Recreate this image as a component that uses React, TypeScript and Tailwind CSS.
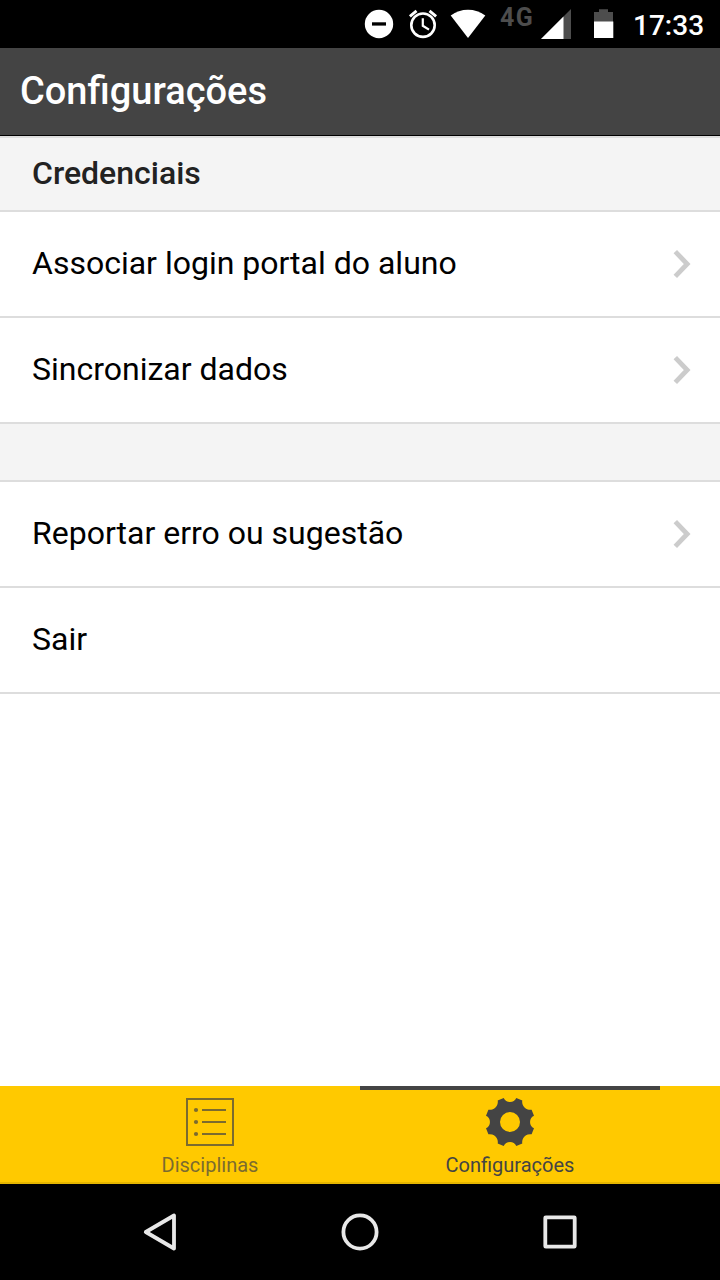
import React from "react";

function StatusBar() {
  return (
    <div className="flex h-12 shrink-0 items-start bg-black pl-[364px] text-white">
      <svg className="h-12 w-[30px]" viewBox="364 0 30 48">
        <circle cx="379" cy="24" r="14.2" fill="#fff" />
        <rect x="372" y="22.3" width="14" height="3.3" fill="#000" />
      </svg>
      <svg className="ml-[14px] h-12 w-[30px]" viewBox="408 0 30 48" fill="none" stroke="#fff">
        <circle cx="423" cy="25.2" r="11.7" strokeWidth="2.6" />
        <path d="M422.8 18.2V25.8L429 29.6" strokeWidth="2.2" />
        <path d="M409.9 16.3L416.5 10.8M436.1 16.3L429.5 10.8" strokeWidth="2.9" />
      </svg>
      <svg className="ml-[12px] h-12 w-[36px]" viewBox="450 0 36 48">
        <path d="M450.7 15.4Q458.5 9.8 468 9.8T485.3 15.4L468 38Z" fill="#fff" />
      </svg>
      <span className="ml-[14px] mt-[3px] w-[36px] whitespace-nowrap text-[25px] leading-[29px] font-bold tracking-[1.5px] text-[#4d4d4d]">4G</span>
      <svg className="ml-[4px] h-12 w-[32px]" viewBox="540 0 32 48">
        <path d="M541 39L571 9V39Z" fill="#4d4d4d" />
        <path d="M541 39L563.5 16.5V39Z" fill="#fff" />
      </svg>
      <svg className="ml-[21px] h-12 w-[22px]" viewBox="593 0 22 48">
        <path d="M594 12H599V9.3H608V12H613V22H594Z" fill="#4d4d4d" />
        <rect x="594" y="21.5" width="19.3" height="16.5" fill="#fff" />
      </svg>
      <span className="ml-[18px] mt-[9px] whitespace-nowrap text-[28px] leading-[33px] font-medium">17:33</span>
    </div>
  );
}

function Row({ label, arrow = true }: { label: string; arrow?: boolean }) {
  return (
    <div className="flex h-[106px] shrink-0 items-center justify-between border-b-2 border-[#dddddd] bg-white pr-[28px] pl-8">
      <span className="pb-[2px] text-[32px] leading-[38px] text-black">{label}</span>
      {arrow && (
        <svg className="h-8 w-5" viewBox="0 0 20 32" fill="none">
          <path d="M3.3 3.6L15.2 16L3.3 28.4" stroke="#cccccc" strokeWidth="4.8" />
        </svg>
      )}
    </div>
  );
}

function TabBar() {
  return (
    <div className="flex h-[98px] shrink-0 border-b-2 border-[#e6b600] bg-[#ffc900] px-[60px]">
      <div className="flex w-[300px] flex-col items-center pt-3 text-[#444444] opacity-70">
        <svg className="h-12 w-12" viewBox="0 0 48 48">
          <rect x="1" y="1" width="46" height="46" fill="none" stroke="currentColor" strokeWidth="2" />
          <path d="M16 12H40M16 24H40M16 36H40" stroke="currentColor" strokeWidth="2" />
          <circle cx="10" cy="12" r="2.1" fill="currentColor" />
          <circle cx="10" cy="24" r="2.1" fill="currentColor" />
          <circle cx="10" cy="36" r="2.1" fill="currentColor" />
        </svg>
        <span className="mt-[7px] text-[20px] leading-6">Disciplinas</span>
      </div>
      <div className="flex w-[300px] flex-col items-center border-t-4 border-[#444444] pt-2 text-[#444444]">
        <svg className="h-12 w-12" viewBox="-24 -24 48 48">
          <path
            fill="currentColor"
            fillRule="evenodd"
            d="M-6.3-24A7 7 0 0 0 6.3-24L12.3-21.6A8 8 0 0 0 21.6-12.3L24-6.3A7 7 0 0 0 24 6.3L21.6 12.3A8 8 0 0 0 12.3 21.6L6.3 24A7 7 0 0 0-6.3 24L-12.3 21.6A8 8 0 0 0-21.6 12.3L-24 6.3A7 7 0 0 0-24-6.3L-21.6-12.3A8 8 0 0 0-12.3-21.6ZM10 0A10 10 0 1 0-10 0A10 10 0 1 0 10 0Z"
          />
        </svg>
        <span className="mt-[7px] text-[20px] leading-6">Configurações</span>
      </div>
    </div>
  );
}

function NavigationBar() {
  return (
    <div className="flex h-24 shrink-0 items-center justify-between bg-black px-[140px]">
      <svg className="h-10 w-10" viewBox="140 1212 40 40" fill="none">
        <path d="M174 1215.5V1248.5L145.8 1232Z" stroke="#e8e8e8" strokeWidth="3.8" strokeLinejoin="round" />
      </svg>
      <svg className="h-10 w-10" viewBox="0 0 40 40" fill="none">
        <circle cx="20" cy="20" r="16.6" stroke="#e8e8e8" strokeWidth="3.8" />
      </svg>
      <svg className="h-10 w-10" viewBox="0 0 40 40" fill="none">
        <rect x="5.3" y="5.3" width="29.4" height="29.4" rx=".5" stroke="#e8e8e8" strokeWidth="3.8" />
      </svg>
    </div>
  );
}

export default function App() {
  return (
    <div className="flex h-[1280px] w-[720px] flex-col overflow-hidden bg-white font-[Roboto,sans-serif]">
      <StatusBar />
      <header className="flex h-[88px] shrink-0 items-center border-b border-black bg-[#444444] pl-5">
        <h1 className="pb-[2px] text-[38px] leading-[44px] font-medium text-white">Configurações</h1>
      </header>
      <main className="flex flex-1 flex-col">
        <h2 className="h-[76px] shrink-0 border-y-2 border-[#dddddd] bg-[#f4f4f4] pt-4 pl-8 text-[32px] leading-[38px] font-medium text-[#222222]">Credenciais</h2>
        <Row label="Associar login portal do aluno" />
        <Row label="Sincronizar dados" />
        <div className="h-[58px] shrink-0 border-b-2 border-[#dddddd] bg-[#f4f4f4]" />
        <Row label="Reportar erro ou sugestão" />
        <Row label="Sair" arrow={false} />
      </main>
      <TabBar />
      <NavigationBar />
    </div>
  );
}
